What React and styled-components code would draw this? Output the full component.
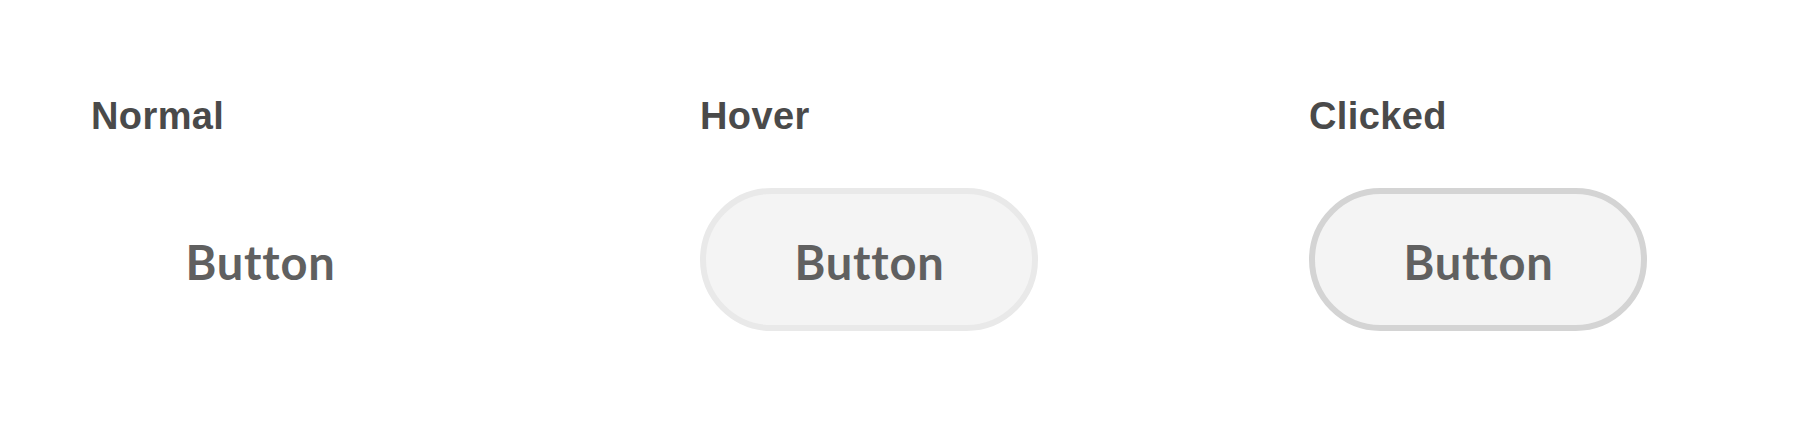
import styled, { createGlobalStyle } from "styled-components";

const GlobalStyle = createGlobalStyle`
  body {
    margin: 0;
    background: #ffffff;
  }
`

const StyledPage = styled.div`
  display: grid;
  grid-template-columns: 609px 609px auto;
  padding: 93px 0 0 91px;
  height: 423px;
  box-sizing: border-box;
`
const StyledColumn = styled.div`
  display: flex;
  flex-direction: column;
  align-items: flex-start;
  gap: 49px;
`
const StyledLabel = styled.h2`
  margin: 0;
  font-family: "Liberation Sans", Arial, sans-serif;
  font-weight: bold;
  font-size: 38px;
  line-height: 46px;
  letter-spacing: 0.4px;
  color: #4a4a4a;
`
const StyledButton = styled.button`
  display: flex;
  align-items: center;
  justify-content: center;
  width: 338px;
  height: 143px;
  box-sizing: border-box;
  border-radius: 72px;
  border: 6px solid ${(p) => p.$border || "transparent"};
  background: ${(p) => (p.$filled ? "#f4f4f4" : "transparent")};
  font-family: Lato, "Open Sans", sans-serif;
  font-weight: 700;
  font-size: 47px;
  letter-spacing: 0.8px;
  color: #606060;
  padding: 4px 0 0 1px;
  cursor: pointer;
`

const states = [
    { label: "Normal" },
    { label: "Hover", filled: true, border: "#e9e9e9" },
    { label: "Clicked", filled: true, border: "#d4d4d4" },
]

function App(){
    return(
        <>
            <GlobalStyle />
            <StyledPage>
                {states.map((s) => (
                    <StyledColumn key={s.label}>
                        <StyledLabel>{s.label}</StyledLabel>
                        <StyledButton $filled={s.filled} $border={s.border}>Button</StyledButton>
                    </StyledColumn>
                ))}
            </StyledPage>
        </>
    )
}

export default App;
